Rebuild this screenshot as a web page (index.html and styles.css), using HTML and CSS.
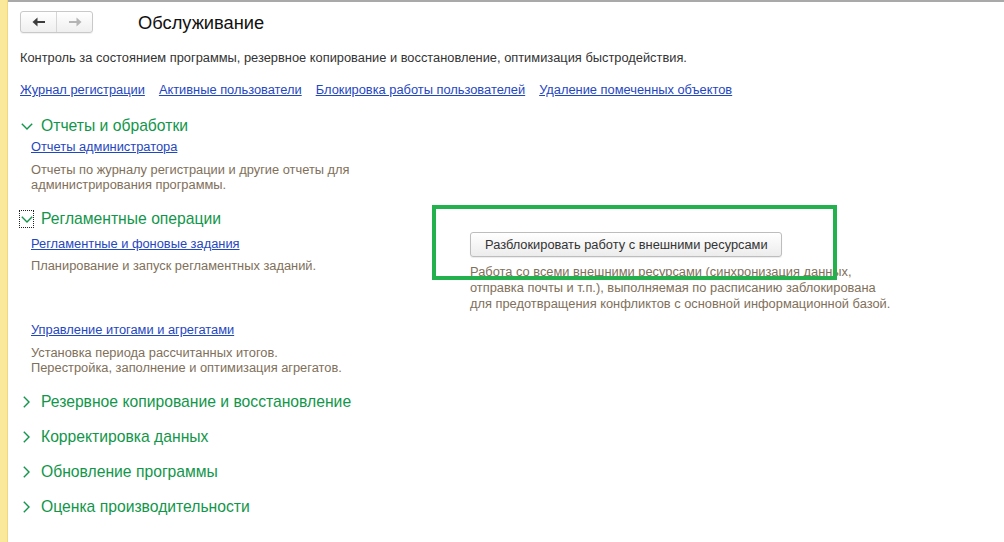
FILE: index.html
```html
<!DOCTYPE html>
<html lang="ru">
<head>
<meta charset="utf-8">
<title>Обслуживание</title>
<link rel="stylesheet" href="styles.css">
</head>
<body>
<div class="strip"></div>
<div class="main">
  <div class="topbar">
    <div class="nav">
      <div class="navbtn">
        <svg width="14" height="10" viewBox="0 0 14 10"><path d="M13 5H4" stroke="#3c3c3c" stroke-width="2"/><path d="M0.5 5L5.5 0.5V9.5Z" fill="#3c3c3c"/></svg>
      </div>
      <div class="navbtn">
        <svg width="14" height="10" viewBox="0 0 14 10"><path d="M1 5H10" stroke="#b4b4b4" stroke-width="2"/><path d="M13.5 5L8.5 0.5V9.5Z" fill="#b4b4b4"/></svg>
      </div>
    </div>
    <h1 class="title">Обслуживание</h1>
  </div>
  <p class="lead">Контроль за состоянием программы, резервное копирование и восстановление, оптимизация быстродействия.</p>
  <div class="toplinks">
    <a href="#">Журнал регистрации</a>
    <a href="#">Активные пользователи</a>
    <a href="#">Блокировка работы пользователей</a>
    <a href="#">Удаление помеченных объектов</a>
  </div>

  <section class="group g1">
    <div class="hdr"><span class="chev"><svg width="12" height="7" viewBox="0 0 12 7"><path d="M0.8 0.8L6 6L11.2 0.8" fill="none" stroke="#11964a" stroke-width="1.4"/></svg></span>Отчеты и обработки</div>
    <div class="body">
      <a href="#" class="sublink">Отчеты администратора</a>
      <p class="note">Отчеты по журналу регистрации и другие отчеты для<br>администрирования программы.</p>
    </div>
  </section>

  <section class="group g2">
    <div class="hdr"><span class="chev focus"><svg width="12" height="7" viewBox="0 0 12 7"><path d="M0.8 0.8L6 6L11.2 0.8" fill="none" stroke="#11964a" stroke-width="1.4"/></svg></span>Регламентные операции</div>
    <div class="cols">
      <div class="col-left">
        <a href="#" class="sublink">Регламентные и фоновые задания</a>
        <p class="note tight">Планирование и запуск регламентных заданий.</p>
        <a href="#" class="sublink second">Управление итогами и агрегатами</a>
        <p class="note">Установка периода рассчитанных итогов.<br>Перестройка, заполнение и оптимизация агрегатов.</p>
      </div>
      <div class="col-right">
        <button class="btn" type="button">Разблокировать работу с внешними ресурсами</button>
        <p class="note wide">Работа со всеми внешними ресурсами (синхронизация данных,<br>отправка почты и т.п.), выполняемая по расписанию заблокирована<br>для предотвращения конфликтов с основной информационной базой.</p>
      </div>
    </div>
  </section>

  <section class="group closed"><div class="hdr"><span class="chev"><svg width="7" height="12" viewBox="0 0 7 12"><path d="M0.8 0.8L6 6L0.8 11.2" fill="none" stroke="#11964a" stroke-width="1.4"/></svg></span>Резервное копирование и восстановление</div></section>
  <section class="group closed"><div class="hdr"><span class="chev"><svg width="7" height="12" viewBox="0 0 7 12"><path d="M0.8 0.8L6 6L0.8 11.2" fill="none" stroke="#11964a" stroke-width="1.4"/></svg></span>Корректировка данных</div></section>
  <section class="group closed"><div class="hdr"><span class="chev"><svg width="7" height="12" viewBox="0 0 7 12"><path d="M0.8 0.8L6 6L0.8 11.2" fill="none" stroke="#11964a" stroke-width="1.4"/></svg></span>Обновление программы</div></section>
  <section class="group closed"><div class="hdr"><span class="chev"><svg width="7" height="12" viewBox="0 0 7 12"><path d="M0.8 0.8L6 6L0.8 11.2" fill="none" stroke="#11964a" stroke-width="1.4"/></svg></span>Оценка производительности</div></section>
</div>
<div class="highlight"></div>
</body>
</html>
```
FILE: styles.css
```css
html, body {
  margin: 0;
  padding: 0;
  background: #fff;
}
body {
  display: flex;
  min-height: 542px;
  font-family: "Liberation Sans", Arial, sans-serif;
  font-size: 12.85px;
  color: #333;
  position: relative;
  overflow: hidden;
}
.strip {
  width: 7px;
  flex: 0 0 7px;
  background: #fbe99b;
  border-right: 1px solid #f0d97a;
}
.main {
  flex: 1;
  border-top: 2px solid #a9a9a9;
  padding: 9px 0 0 12px;
  box-sizing: border-box;
}
.topbar {
  display: flex;
  align-items: center;
  height: 22px;
}
.nav {
  display: flex;
  width: 73px;
  height: 22px;
  box-sizing: border-box;
  border: 1px solid #c9c9c9;
  border-radius: 3px;
  background: linear-gradient(#ffffff, #efefef);
  box-shadow: 0 1px 1px rgba(0,0,0,0.06);
}
.navbtn {
  flex: 1;
  display: flex;
  align-items: center;
  justify-content: center;
}
.navbtn + .navbtn {
  border-left: 1px solid #d6d6d6;
}
.title {
  margin: 0 0 0 45px;
  font-size: 18.3px;
  font-weight: normal;
  color: #111;
  line-height: 24px;
  padding-top: 1px;
}
.lead {
  margin: 17px 0 0;
  line-height: 16px;
}
.toplinks {
  display: flex;
  gap: 14px;
  margin-top: 16px;
  line-height: 16px;
}
a {
  color: #1f47bf;
  text-decoration: underline;
}
.group .hdr {
  display: flex;
  align-items: center;
  font-size: 15.7px;
  line-height: 20px;
  color: #11964a;
}
.chev {
  width: 15px;
  height: 18px;
  margin-left: -1px;
  margin-right: 7px;
  box-sizing: border-box;
  display: flex;
  align-items: center;
  justify-content: center;
}
.chev.focus {
  border: 1px dotted #222;
}
.g1 { margin-top: 18px; }
.g2 { margin-top: 17px; }
.closed { margin-top: 15px; }
.g2 + .closed { margin-top: 17px; }
.body, .cols {
  padding-left: 11px;
}
.body .sublink {
  display: block;
  margin-top: 3px;
  line-height: 16px;
  width: max-content;
}
.note {
  margin: 7px 0 0;
  line-height: 15px;
  color: #7f705a;
}
.note.tight {
  margin-top: 6px;
}
.cols {
  display: grid;
  grid-template-columns: 439px auto;
  margin-top: 3px;
}
.col-left .sublink {
  display: block;
  width: max-content;
  line-height: 16px;
  margin-top: 4px;
}
.col-left .sublink.second {
  margin-top: 49px;
}
.btn {
  display: block;
  width: 312px;
  height: 25px;
  box-sizing: border-box;
  border: 1px solid #bdbdbd;
  border-radius: 3px;
  background: linear-gradient(#ffffff, #ececec);
  box-shadow: 0 1px 1px rgba(0,0,0,0.08);
  font-family: "Liberation Sans", Arial, sans-serif;
  font-size: 12.85px;
  color: #333;
  text-align: left;
  padding: 0 0 0 14px;
  margin-top: 0;
}
.note.wide {
  line-height: 16px;
  margin-top: 7px;
}
.highlight {
  position: absolute;
  left: 432px;
  top: 205px;
  width: 405px;
  height: 75px;
  box-sizing: border-box;
  border: 4px solid #22b14c;
  pointer-events: none;
}
```
